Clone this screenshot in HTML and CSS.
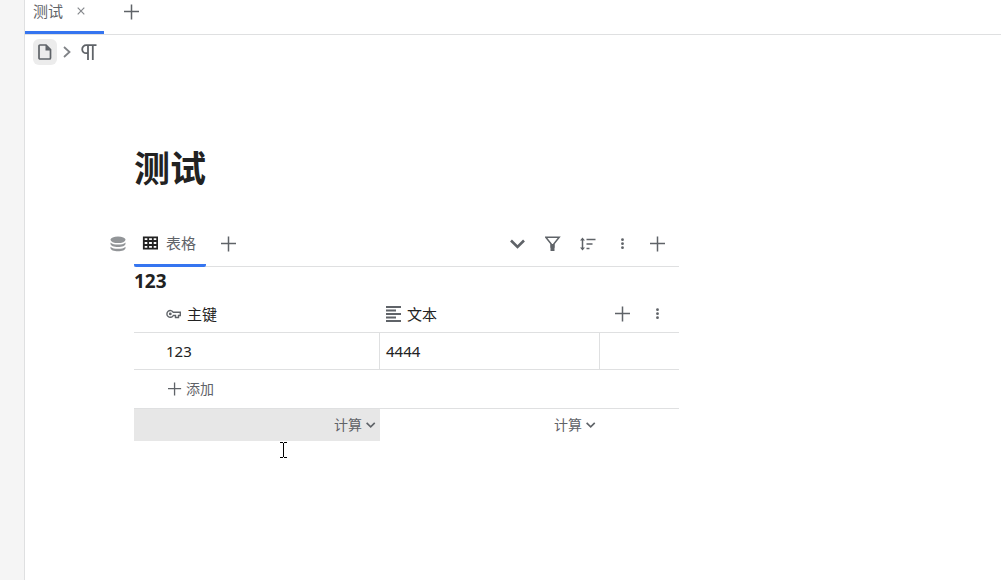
FILE: index.html
```html
<!DOCTYPE html>
<html lang="zh-CN">
<head>
<meta charset="utf-8">
<title>测试</title>
<link rel="stylesheet" href="styles.css">
</head>
<body>
<svg class="sprite" aria-hidden="true">
  <symbol id="plus" viewBox="0 0 16 16"><path d="M7.500.5v15M0 7.500h15" fill="none" stroke="currentColor" stroke-width="1.500"/></symbol>
  <symbol id="dots" viewBox="0 0 16 16"><circle cx="7.500" cy="3.700" r="1.400"/><circle cx="7.500" cy="7.700" r="1.400"/><circle cx="7.500" cy="11.700" r="1.400"/></symbol>
  <symbol id="down" viewBox="0 0 16 16"><path d="M1 4.500l6.500 6.500L14 4.500" fill="none" stroke="currentColor" stroke-width="2.600"/></symbol>
</svg>
<div class="app">
  <aside class="dock"></aside>
  <main class="main">
    <nav class="tabs">
      <div class="tab">
        <span>测试</span>
        <button class="close" aria-label="关闭"><svg viewBox="0 0 8 8"><path d="M.7.7l6.600 6.600M7.300.7L.7 7.300" fill="none" stroke="currentColor" stroke-width="1.200"/></svg></button>
      </div>
      <button class="new-tab" aria-label="新建"><svg class="icon"><use href="#plus"/></svg></button>
    </nav>
    <div class="crumbs">
      <button class="crumb doc" aria-label="文档"><svg class="icon" viewBox="0 0 16 16"><path d="M3 1h6l4.500 4.500V14a1 1 0 0 1-1 1H3a1 1 0 0 1-1-1V2a1 1 0 0 1 1-1z" fill="none" stroke="currentColor" stroke-width="1.700"/><path d="M8.500 1v5.500H14z"/></svg></button>
      <svg class="sep" viewBox="0 0 8 12"><path d="M1 1l5.500 5L1 11" fill="none" stroke="currentColor" stroke-width="1.800"/></svg>
      <button class="crumb" aria-label="段落"><svg class="icon" viewBox="0 0 16 16"><path d="M15.500 1.200H5.200a4 4 0 0 0 0 8H7M7 1.200V16M11.800 1.200V16" fill="none" stroke="currentColor" stroke-width="1.800"/></svg></button>
    </div>
    <article class="page">
      <h1>测试</h1>
      <section class="database">
        <header class="views">
          <svg class="icon stack" viewBox="0 0 16 16"><ellipse cx="8" cy="3.800" rx="7.500" ry="3.300"/><path d="M.5 6.500C2 8.200 5 8.600 8 8.600s6-.4 7.500-2.100v1.200C15.500 9.700 12 11 8 11S.5 9.700.5 7.700zM.5 10.700c1.500 1.700 4.500 2.100 7.500 2.100s6-.4 7.500-2.100v1.200c0 2-3.500 3.300-7.500 3.300S.5 13.900.5 11.900z"/></svg>
          <button class="view"><svg class="icon" viewBox="0 0 16 16"><path d="M1.800 2.300h13.400v11.400H1.800zM1.500 6h14M1.500 10h14M6.200 2v12M10.800 2v12" fill="none" stroke="currentColor" stroke-width="1.800"/></svg><span>表格</span></button>
          <button class="tool" aria-label="添加视图"><svg class="icon"><use href="#plus"/></svg></button>
          <span class="fill"></span>
          <button class="tool" aria-label="展开"><svg class="icon"><use href="#down"/></svg></button>
          <button class="tool" aria-label="筛选"><svg class="icon" viewBox="0 0 16 16"><path d="M.8 1.200h13.400L8.800 8v3H6.200V8z" fill="none" stroke="currentColor" stroke-width="1.500"/><path d="M5.500 8h4v7h-4z"/></svg></button>
          <button class="tool" aria-label="排序"><svg class="icon" viewBox="0 0 16 16"><path d="M2.500 3v10M6.500 3.500h9M6.500 8h6M6.500 12.500h3" fill="none" stroke="currentColor" stroke-width="1.500"/><path d="M2.500 1.500L5 4.500H0zM2.500 14.500L0 11.500h5z"/></svg></button>
          <button class="tool" aria-label="更多"><svg class="icon"><use href="#dots"/></svg></button>
          <button class="tool" aria-label="添加条目"><svg class="icon"><use href="#plus"/></svg></button>
        </header>
        <h2>123</h2>
        <table>
          <colgroup><col class="key-col"><col class="text-col"><col></colgroup>
          <thead>
            <tr>
              <th><span class="field"><svg class="icon" viewBox="0 0 16 16"><path d="M7.300 6.300a3.400 3.400 0 1 0 0 3.200h2.200v2h3v-2h1.800V6.300z" fill="none" stroke="currentColor" stroke-width="1.400"/><circle cx="4.300" cy="7.900" r="1.400"/></svg>主键</span></th>
              <th><span class="field"><svg class="icon" viewBox="0 0 16 16"><path d="M0 1h15M0 4.500h10M0 8h15M0 11.500h10M0 15h15" fill="none" stroke="currentColor" stroke-width="1.800"/></svg>文本</span></th>
              <th><span class="actions"><button class="tool" aria-label="添加字段"><svg class="icon"><use href="#plus"/></svg></button><button class="tool" aria-label="更多"><svg class="icon"><use href="#dots"/></svg></button></span></th>
            </tr>
          </thead>
          <tbody>
            <tr class="record"><td>123</td><td>4444</td><td></td></tr>
            <tr class="add-row"><td colspan="3"><button class="add"><svg class="add-icon"><use href="#plus"/></svg>添加</button></td></tr>
          </tbody>
          <tfoot>
            <tr>
              <td class="hover"><button class="calc">计算<svg><use href="#down"/></svg></button></td>
              <td><button class="calc">计算<svg><use href="#down"/></svg></button></td>
              <td></td>
            </tr>
          </tfoot>
        </table>
        <svg class="cursor" viewBox="0 0 8 16" aria-hidden="true"><path d="M0 .5h3M4 .5h3M3.500 1v14M0 15.500h3M4 15.500h3" fill="none" stroke="currentColor"/></svg>
      </section>
    </article>
  </main>
</div>
</body>
</html>
```

FILE: styles.css
```css
* { box-sizing: border-box; }

body {
  margin: 0;
  background: #fff;
  color: #222;
  font: 16px/24px "Noto Sans", "Noto Sans CJK SC", sans-serif;
}

button {
  padding: 0;
  border: 0;
  background: none;
  color: #5f6368;
  font: inherit;
  display: flex;
  align-items: center;
  justify-content: center;
}

svg { display: block; flex: none; fill: currentColor; }
.sprite { display: none; }
.icon { width: 16px; height: 16px; }

.app { display: flex; min-height: 100vh; }
.dock { width: 25px; background: #f5f5f5; border-right: 1px solid #dfe0e1; }
.main { flex: 1; min-width: 0; }

.tabs {
  display: flex;
  height: 35px;
  border-bottom: 1px solid #dfe0e1;
}
.tab {
  display: flex;
  height: 34px;
  padding: 0 19px 9px 8px;
  gap: 14px;
  align-items: center;
  color: #5f6368;
  border-bottom: 3px solid #3575f0;
}
.tab span { font-size: 15px; }
.close { width: 8px; height: 8px; color: #85888c; }
.close svg { width: 8px; height: 8px; }
.new-tab { width: 55px; height: 24px; }

.crumbs { display: flex; align-items: center; padding: 4px 8px; }
.crumb { width: 24px; height: 26px; border-radius: 6px; }
.doc { background: #ececec; }
.sep { width: 8px; height: 12px; margin: 0 6px; color: #808387; }

.page { max-width: 654px; padding-left: 109px; }
h1 { margin: 73px 0 25px; font-size: 36px; line-height: 54px; font-weight: 700; }

.database { position: relative; }
.views {
  display: flex;
  height: 46px;
  padding-right: 4px;
  border-bottom: 1px solid #dfe0e1;
}
.stack { position: absolute; right: 100%; top: 15px; margin-right: 8px; color: #929598; }
.view { height: 46px; padding: 0 10px 0 8px; gap: 8px; border-bottom: 3px solid #3575f0; border-radius: 2px; font-size: 15px; }
.view .icon { color: #222; }
.views .tool { height: 46px; }
.view + .tool { margin-left: 5px; }
.tool { width: 35px; height: 36px; }
.fill { flex: 1; }

h2 { margin: 0; font-size: 19px; line-height: 29px; font-weight: 700; }

table { width: 100%; border-collapse: separate; border-spacing: 0; table-layout: fixed; font-size: 15px; }
.key-col { width: 246px; }
.text-col { width: 220px; }
th, td { height: 37px; padding: 0 6px; text-align: left; font-weight: 400; border-bottom: 1px solid #dfe0e1; }
th:first-child, .record td:first-child, .add-row td { padding-left: 32px; }
.record td:not(:last-child) { border-right: 1px solid #dfe0e1; }
th:last-child { padding: 0 4px; }
.field { display: flex; align-items: center; gap: 5px; }
.field svg { color: #5f6368; }
.actions { display: flex; justify-content: flex-end; }
.add-row td { height: 39px; }
.add { gap: 4px; margin-left: 2px; font-size: 14px; }
.add-icon { width: 14px; height: 14px; }
tfoot td { height: 32px; padding: 0 4px; border: 0; }
.hover { background: #e7e7e7; }
.calc { gap: 4px; margin-left: auto; font-size: 14px; }
.calc svg { width: 10px; height: 10px; }

.cursor { position: absolute; left: 146px; top: 221px; width: 8px; height: 16px; color: #000; }
```
